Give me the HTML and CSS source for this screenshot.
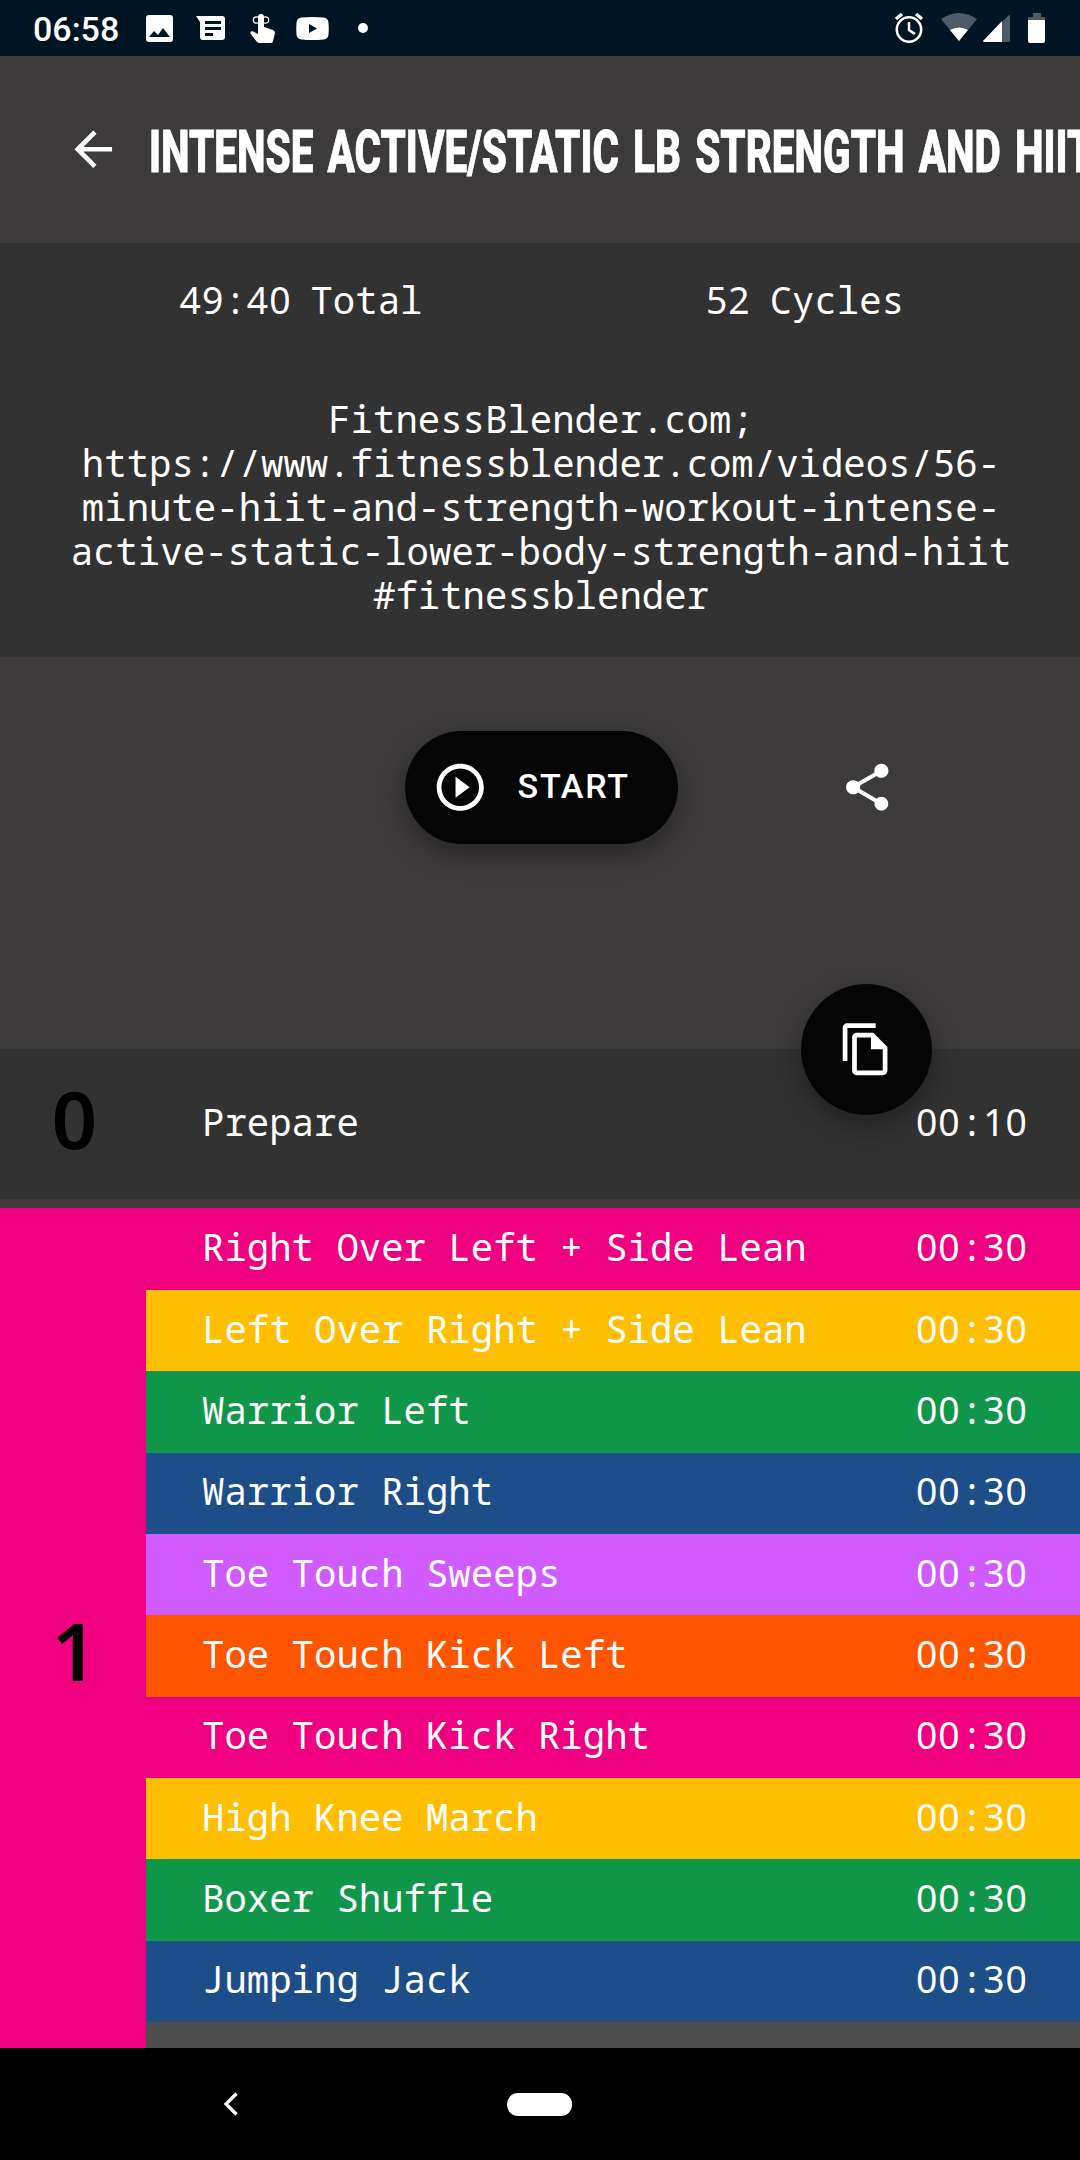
FILE: index.html
```html
<!DOCTYPE html>
<html lang="en">
<head>
<meta charset="utf-8">
<title>Workout</title>
<link rel="stylesheet" href="styles.css">
</head>
<body>
<div class="status">
  <span class="clock">06:58</span>
  <svg class="status-icons" viewBox="0 0 200 56" fill="#fff">
    <path fill-rule="evenodd" d="M4 15h21a3 3 0 0 1 3 3v21a3 3 0 0 1-3 3H4a3 3 0 0 1-3-3V18a3 3 0 0 1 3-3zM4 37h21l-7-9-5 7-4-4z"/>
    <path fill-rule="evenodd" d="M51 16h26a3 3 0 0 1 3 3v18a3 3 0 0 1-3 3H58a3 3 0 0 1-3-3V22zM60 21v3h16v-3zM60 27v3h16v-3zM60 33v3h8v-3z"/>
    <path d="M113 17a3 3 0 0 1 6 0v10l9 3q2 1 2 3l-2 8q0 2-3 2h-10q-2 0-3-1l-7-9 2-2 6 3z"/>
    <g fill="none" stroke="#fff" stroke-width="1.2"><circle cx="111.500" cy="20" r="3.200"/><circle cx="120.500" cy="20" r="3.200"/></g>
    <path fill-rule="evenodd" d="M156.500 17.500q11-1 22 0 4.500.5 5 5 .5 6 0 12-.5 4.500-5 5-11 1-22 0-4.500-.5-5-5-.5-6 0-12 .5-4.500 5-5zM164 24v9l8-4.500z"/>
  </svg>
  <span class="more"></span>
  <svg class="system-icons" viewBox="0 0 160 56" fill="#fff">
    <g fill="none" stroke="#fff" stroke-width="2.500"><circle cx="19" cy="29.500" r="12.200"/><path d="M19 22v8l6 4"/><path stroke-width="3.500" d="M6 19l6-5M32 19l-6-5"/></g>
    <path opacity=".3" d="M51 19q18-12 36 0L69 41z"/>
    <path d="M60 30q9-5 18 0l-9 11z"/>
    <path opacity=".3" d="M112 22l6-6q2-2 2 0v24q0 2-2 2h-6z"/>
    <path d="M112 21v21H94q-2-1 0-2z"/>
    <path opacity=".3" d="M138 20v-2q0-1 1-1h4v-4h8v4h3q1 0 1 1v2z"/>
    <path d="M138 20h17v21q0 2-2 2h-13q-2 0-2-2z"/>
  </svg>
</div>

<header class="header">
  <svg class="icon back" viewBox="0 0 24 24"><path d="M20 11H7.830l5.590-5.590L12 4l-8 8 8 8 1.410-1.410L7.830 13H20v-2z"/></svg>
  <h1 class="title">INTENSE ACTIVE/STATIC LB STRENGTH AND HIIT</h1>
</header>

<section class="info">
  <div class="totals">
    <span><span class="num">49</span>:<span class="num">40</span> Total</span>
    <span><span class="num">52</span> Cycles</span>
  </div>
  <p class="description">FitnessBlender.com;<br>https://www.fitnessblender.com/videos/56-<br>minute-hiit-and-strength-workout-intense-<br>active-static-lower-body-strength-and-hiit<br>#fitnessblender</p>
</section>

<section class="actions">
  <button class="start">
    <svg class="icon" viewBox="0 0 24 24"><path d="M10 16.500l6-4.500-6-4.500v9zM12 2C6.480 2 2 6.480 2 12s4.480 10 10 10 10-4.480 10-10S17.520 2 12 2zm0 18c-4.410 0-8-3.590-8-8s3.590-8 8-8 8 3.590 8 8-3.590 8-8 8z"/></svg>
    <span>START</span>
  </button>
  <svg class="icon share" viewBox="0 0 24 24"><path d="M18 16.080c-.76 0-1.440.3-1.960.77L8.910 12.700c.05-.23.09-.46.09-.7s-.04-.47-.09-.7l7.050-4.110c.54.5 1.250.81 2.040.81 1.660 0 3-1.340 3-3s-1.340-3-3-3-3 1.340-3 3c0 .24.040.47.090.7L8.040 9.810C7.500 9.310 6.790 9 6 9c-1.660 0-3 1.340-3 3s1.340 3 3 3c.79 0 1.500-.31 2.040-.81l7.120 4.160c-.05.21-.08.43-.08.650 0 1.610 1.310 2.920 2.920 2.920s2.920-1.310 2.920-2.920-1.310-2.920-2.920-2.920z"/></svg>
</section>

<main class="list">
  <button class="copy">
    <svg class="icon" viewBox="0 0 24 24"><path d="M16 1H4c-1.100 0-2 .9-2 2v14h2V3h12V1zm-1 4H8c-1.100 0-1.990.9-1.990 2L6 21c0 1.100.89 2 1.990 2H19c1.100 0 2-.9 2-2V11l-6-6zM8 21V7h6v5h5v9H8z"/></svg>
  </button>
  <div class="group prepare">
    <div class="index">0</div>
    <div class="rows"><div class="row"><span>Prepare</span><span><span class="num">00</span>:<span class="num">10</span></span></div></div>
  </div>
  <div class="group cycle">
    <div class="index">1</div>
    <div class="rows">
      <div class="row pink first"><span>Right Over Left + Side Lean</span><span><span class="num">00</span>:<span class="num">30</span></span></div>
      <div class="row yellow"><span>Left Over Right + Side Lean</span><span><span class="num">00</span>:<span class="num">30</span></span></div>
      <div class="row green"><span>Warrior Left</span><span><span class="num">00</span>:<span class="num">30</span></span></div>
      <div class="row blue"><span>Warrior Right</span><span><span class="num">00</span>:<span class="num">30</span></span></div>
      <div class="row purple"><span>Toe Touch Sweeps</span><span><span class="num">00</span>:<span class="num">30</span></span></div>
      <div class="row orange"><span>Toe Touch Kick Left</span><span><span class="num">00</span>:<span class="num">30</span></span></div>
      <div class="row pink"><span>Toe Touch Kick Right</span><span><span class="num">00</span>:<span class="num">30</span></span></div>
      <div class="row yellow"><span>High Knee March</span><span><span class="num">00</span>:<span class="num">30</span></span></div>
      <div class="row green"><span>Boxer Shuffle</span><span><span class="num">00</span>:<span class="num">30</span></span></div>
      <div class="row blue"><span>Jumping Jack</span><span><span class="num">00</span>:<span class="num">30</span></span></div>
      <div class="rest"></div>
    </div>
  </div>
</main>

<nav class="nav">
  <svg class="nav-back" viewBox="0 0 16 24"><path d="M13.500 1.500L3 12l10.500 10.500" fill="none" stroke="#fff" stroke-width="3.300"/></svg>
  <span class="home"></span>
</nav>
</body>
</html>
```
FILE: styles.css
```css
* { box-sizing: border-box; }
body {
  margin: 0;
  width: 1080px;
  height: 2160px;
  overflow: hidden;
  display: flex;
  flex-direction: column;
  background: #3d3a3b;
  color: #fff;
  font: 37.35px/44px "Noto Sans Mono", "DejaVu Sans Mono", monospace;
}
button { border: 0; padding: 0; color: inherit; background: rgba(0, 0, 0, .9); }
.icon { display: block; width: 56.500px; height: 56.500px; fill: #fff; flex: none; }
.num { font-family: "Noto Sans", sans-serif; letter-spacing: 1.05px; }

.status { height: 56px; flex: none; display: flex; align-items: center; background: #001524; padding: 0 30px 0 33px; }
.clock { font: 500 34px/56px Roboto, sans-serif; width: 112px; padding-top: 2px; }
.status-icons { width: 200px; height: 56px; }
.more { width: 10px; height: 10px; border-radius: 50%; background: #fff; margin-left: 13px; }
.system-icons { width: 160px; height: 56px; margin-left: auto; }

.header { height: 187px; flex: none; display: flex; align-items: center; padding-left: 65px; overflow: hidden; }
.title { margin: 4px 0 0 27px; flex: none; font: 800 60px/70px Roboto, sans-serif; white-space: nowrap; word-spacing: 6px; transform: scaleX(.675); transform-origin: 0 50%; -webkit-text-stroke: 1px #fff; }

.info { height: 414px; flex: none; background: #323232; padding-top: 35px; }
.totals { display: grid; grid-template-columns: 502px 506px; padding-left: 50px; text-align: center; word-spacing: -3.500px; }
.description { margin: 75px 0 0; padding-left: 2px; text-align: center; white-space: nowrap; }

.actions { height: 392px; flex: none; display: flex; align-items: center; padding: 0 0 131px 405px; }
.start { width: 273px; height: 113px; border-radius: 57px; display: flex; align-items: center; padding-left: 27px; font: 500 34px/40px Roboto, sans-serif; letter-spacing: 1.800px; box-shadow: 0 10px 24px rgba(0, 0, 0, .35); }
.start span { margin: 0 0 3px 29px; }
.share { margin-left: 161px; }

.list { position: relative; height: 999px; flex: none; }
.copy { position: absolute; left: 801px; top: -65px; width: 131px; height: 131px; border-radius: 50%; display: grid; place-items: center; box-shadow: 0 10px 24px rgba(0, 0, 0, .35); }
.group { display: flex; }
.index { width: 146px; flex: none; display: flex; align-items: center; justify-content: center; font: 600 80px/110px "Noto Sans", sans-serif; font-stretch: 87.500%; color: #000; }
.rows { flex: 1; }
.row { height: 81.333px; display: flex; justify-content: space-between; align-items: center; padding: 0 52px 4px 56px; white-space: pre; }
.row.first { height: 82px; }
.prepare { height: 150px; background: #323232; margin-bottom: 9px; }
.prepare .row { height: 150px; padding-bottom: 4px; }
.prepare .index { padding: 0 0 13px 3px; }
.cycle { height: 840px; background: #f00080; }
.cycle .index { padding: 43px 0 0 3px; }
.rest { height: 26px; background: #4e4e4e; }
.pink { background: #f00080; }
.yellow { background: #ffbf00; }
.green { background: #109648; }
.blue { background: #1d4e89; }
.purple { background: #d05cff; }
.orange { background: #ff5500; }

.nav { flex: 1; background: #000; display: flex; align-items: center; padding-left: 223px; }
.nav-back { width: 16px; height: 24px; }
.home { width: 65px; height: 23px; border-radius: 11px; background: #fff; margin-left: 268px; }
```
